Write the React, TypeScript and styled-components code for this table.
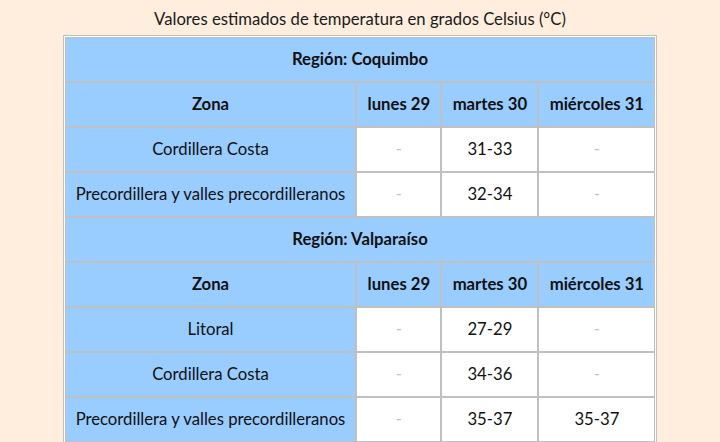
import React from 'react'
import styled, { createGlobalStyle } from 'styled-components'

const GlobalStyle = createGlobalStyle`
	body {
		margin: 8px;
		background: #ffeedd;
		font-family: Lato, "Open Sans", sans-serif;
		color: #111;
	}
`;

const Table = styled.table`
	margin: 0 auto;
	border-collapse: separate;
	border-spacing: 0;
	border: 1px solid #c0c0c0;
	padding: 1px;
	background: #ffffff;
	font-size: 16.7px;
	white-space: nowrap;
`;

const Caption = styled.caption`
	background: #ffeedd;
	line-height: 23px;
	padding-bottom: 4px;
	font-size: 16.7px;
	color: #1a1a1a;
`;

const Cell = styled.td`
	box-sizing: border-box;
	border: 1px solid #c0c0c0;
	padding: 10px;
	line-height: 23px;
	text-align: center;
	vertical-align: middle;
`;

const RegionCell = styled(Cell).attrs({ as: 'th' })`
	background: #99ccff;
	font-weight: 700;
`;

const HeadCell = styled(Cell).attrs({ as: 'th' })<{ $w: number }>`
	width: ${(p) => p.$w}px;
	background: #99ccff;
	font-weight: 700;
`;

const ZoneCell = styled(Cell)`
	background: #99ccff;
`;

const ValueCell = styled(Cell)<{ $empty?: boolean }>`
	background: #ffffff;
	color: ${(p) => (p.$empty ? '#c4c4c4' : '#111')};
`;

type Region = {
	name: string;
	rows: { zone: string; values: string[] }[];
};

const days = ['lunes 29', 'martes 30', 'miércoles 31'];
const widths = [291, 85, 97, 117];

const regions: Region[] = [
	{
		name: 'Coquimbo',
		rows: [
			{ zone: 'Cordillera Costa', values: ['-', '31-33', '-'] },
			{ zone: 'Precordillera y valles precordilleranos', values: ['-', '32-34', '-'] },
		],
	},
	{
		name: 'Valparaíso',
		rows: [
			{ zone: 'Litoral', values: ['-', '27-29', '-'] },
			{ zone: 'Cordillera Costa', values: ['-', '34-36', '-'] },
			{ zone: 'Precordillera y valles precordilleranos', values: ['-', '35-37', '35-37'] },
		],
	},
];

const RegionBlock: React.FC<{ region: Region }> = ({ region }) => (
	<>
		<tr>
			<RegionCell colSpan={4}>Región: {region.name}</RegionCell>
		</tr>
		<tr>
			<HeadCell $w={widths[0]}>Zona</HeadCell>
			{days.map((d, i) => (
				<HeadCell key={d} $w={widths[i + 1]}>
					{d}
				</HeadCell>
			))}
		</tr>
		{region.rows.map((row) => (
			<tr key={row.zone}>
				<ZoneCell>{row.zone}</ZoneCell>
				{row.values.map((v, i) => (
					<ValueCell key={i} $empty={v === '-'}>
						{v}
					</ValueCell>
				))}
			</tr>
		))}
	</>
);

const App: React.FC = () => {
	return (
		<>
			<GlobalStyle />
			<Table>
				<Caption>Valores estimados de temperatura en grados Celsius (°C)</Caption>
				<tbody>
					{regions.map((r) => (
						<RegionBlock key={r.name} region={r} />
					))}
				</tbody>
			</Table>
		</>
	);
};

export default App;
